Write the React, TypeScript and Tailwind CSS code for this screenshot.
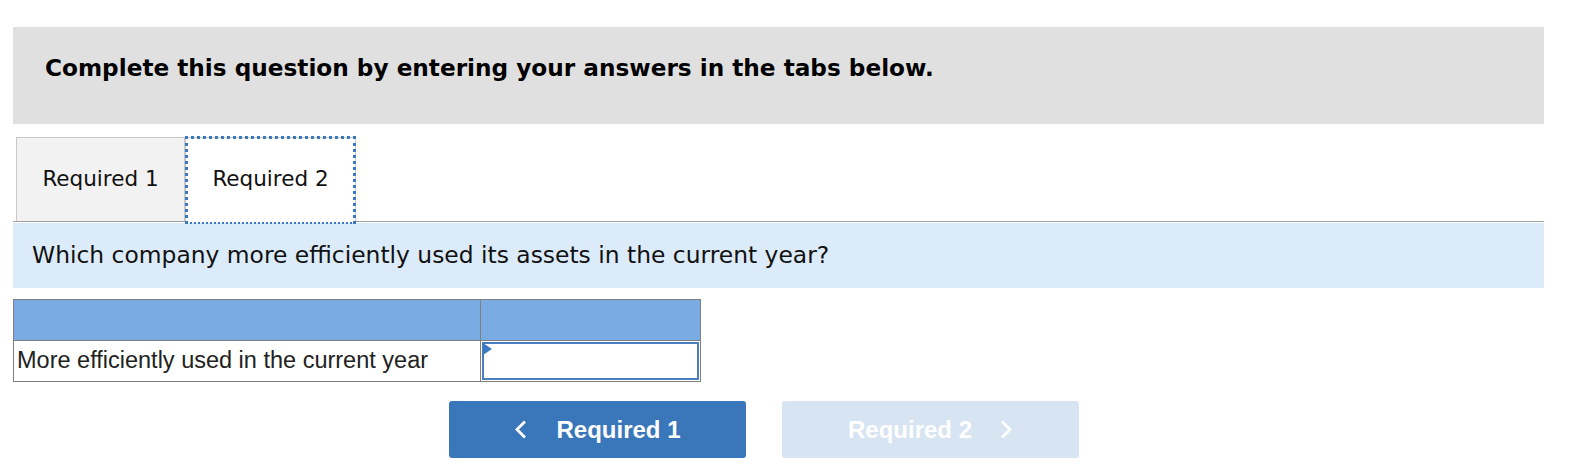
const verdana = { fontFamily: '"DejaVu Sans", Verdana, sans-serif' };
const arial = { fontFamily: '"Liberation Sans", Arial, sans-serif' };

const Chevron = ({ dir }: { dir: 'left' | 'right' }) => (
  <svg width="13" height="19" viewBox="0 0 13 19" fill="none" className="shrink-0">
    <path
      d={dir === 'left' ? 'M11 1.5 L3 9.5 L11 17.5' : 'M2 1.5 L10 9.5 L2 17.5'}
      stroke="currentColor"
      strokeWidth="2.8"
    />
  </svg>
);

export default function App() {
  return (
    <div className="w-[1575px] h-[471px] bg-white pt-[27px] pl-[13px] pr-[31px]" style={verdana}>
      {/* Instruction banner */}
      <div className="h-[97px] bg-[#e0e0e0] pl-[32px] pt-[27px]">
        <p className="text-[23.2px] leading-[28px] font-bold text-black whitespace-nowrap">
          Complete this question by entering your answers in the tabs below.
        </p>
      </div>

      {/* Tabs */}
      <div className="mt-[12px] flex items-end border-b border-[#a0a0a0] h-[86px]">
        <div className="ml-[3px] w-[169px] h-[84px] bg-[#f2f2f2] border border-b-0 border-[#c8c8c8] flex items-center justify-center text-[21.5px] text-[#111]">
          Required 1
        </div>
        <div className="relative w-[171px] h-[85px] -mb-px bg-white border-x border-t border-[#c8c8c8] flex items-center justify-center pb-px text-[21.5px] text-[#111]">
          Required 2
          <span className="absolute -left-px -right-px -top-[2px] -bottom-[2px] border-x-[3px] border-t-[3px] border-b-2 border-dotted border-b-dashed border-[#3b78c2]"></span>
        </div>
      </div>

      {/* Question */}
      <div className="mt-[1px] h-[65px] bg-[#dbebf9] pl-[19px] flex items-center text-[23.4px] text-[#111] whitespace-nowrap">
        Which company more efficiently used its assets in the current year?
      </div>

      {/* Answer table */}
      <table className="mt-[11px] border-collapse table-fixed w-[687px]" style={arial}>
        <tbody>
          <tr className="h-[41px] bg-[#7aace3]">
            <td className="w-[467px] border border-[#808080]"></td>
            <td className="w-[220px] border border-[#808080]"></td>
          </tr>
          <tr className="h-[41px]">
            <td className="border border-[#808080] pl-[3px] text-[23.5px] leading-none text-[#222] whitespace-nowrap">
              More efficiently used in the current year
            </td>
            <td className="border border-[#808080] p-0 relative">
              <div className="mx-px h-[38px] border-2 border-[#4a7fbf] bg-white"></div>
              <span className="absolute left-[2px] top-[2px] w-0 h-0 border-t-[6px] border-b-[6px] border-l-[9px] border-t-transparent border-b-transparent border-l-[#3b78c2]"></span>
            </td>
          </tr>
        </tbody>
      </table>

      {/* Navigation */}
      <div className="mt-[19px] flex gap-[36px] pl-[436px]" style={arial}>
        <button className="w-[297px] h-[57px] shrink-0 rounded-[3px] bg-[#3a77ba] text-white text-[24px] font-bold flex items-center justify-center gap-[29px]">
          <Chevron dir="left" />
          <span>Required 1</span>
        </button>
        <button className="w-[297px] h-[57px] shrink-0 rounded-[3px] bg-[#d7e4f2] text-white text-[24px] font-bold flex items-center justify-center gap-[28px]">
          <span>Required 2</span>
          <Chevron dir="right" />
        </button>
      </div>
    </div>
  );
}
